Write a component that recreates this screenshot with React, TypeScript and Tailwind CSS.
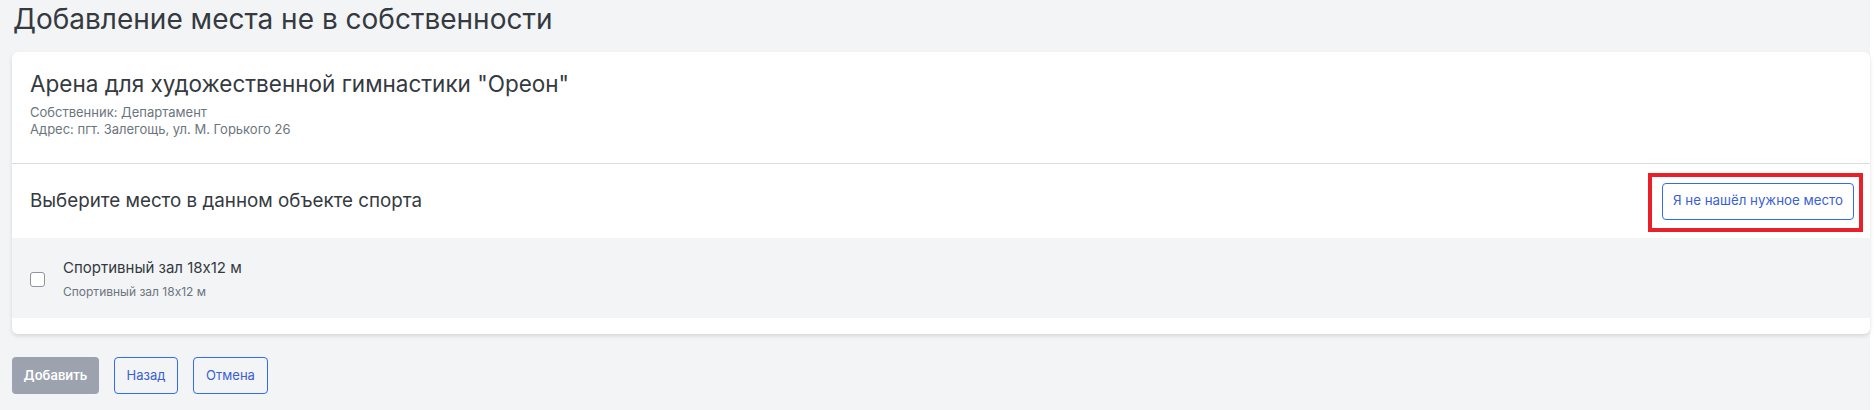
import { useState } from "react";

const FONT = "font-['Inter',sans-serif]";

export default function App() {
	const [checked, setChecked] = useState(false);

	return (
		<div className={`flex h-[410px] w-[1876px] bg-white ${FONT}`}>
			<div className="flex w-[1870px] flex-col bg-[#f3f4f6] pl-3">
				<h1 className="mt-[2px] pl-px text-[28px] leading-[34px] font-normal text-[#343a40]">
					Добавление места не в собственности
				</h1>

				<div className="mt-[16px] overflow-hidden rounded-md bg-white shadow-[0_2px_4px_rgba(0,0,0,0.12)]">
					{/* object summary */}
					<div className="h-[112px] border-b border-[#dcdcdc] px-[18px] pt-[17px]">
						<h2 className="text-[22.5px] leading-[30px] text-[#343a40]">
							Арена для художественной гимнастики "Ореон"
						</h2>
						<div className="mt-[5px] text-[13px] leading-[17px] text-[#6c757d]">
							<div>Собственник: Департамент</div>
							<div>Адрес: пгт. Залегощь, ул. М. Горького 26</div>
						</div>
					</div>

					{/* place picker head */}
					<div className="flex h-[74px] items-center justify-between pr-[16px] pl-[18px]">
						<h3 className="text-[18.8px] text-[#343a40]">
							Выберите место в данном объекте спорта
						</h3>
						<div className="relative">
							<button
								type="button"
								className="h-[37px] w-[192px] rounded-[4px] border border-[#2f6ee8] bg-white text-[13.3px] text-[#3a5fd6]"
							>
								Я не нашёл нужное место
							</button>
							{/* review highlight */}
							<div className="pointer-events-none absolute -top-[10px] -right-[9px] -bottom-[12px] -left-[14px] border-[4px] border-[#e8202a]" />
						</div>
					</div>

					{/* places */}
					<label className="flex h-[80px] cursor-pointer items-center bg-[#f3f4f6] pl-[18px]">
						<input
							type="checkbox"
							checked={checked}
							onChange={(e) => setChecked(e.target.checked)}
							className="mt-[2px] h-[15px] w-[15px] appearance-none rounded-[3px] border border-[#8f959b] bg-white checked:bg-[#2f6ee8]"
						/>
						<div className="ml-[18px]">
							<div className="text-[15px] leading-[22px] text-[#343a40]">
								Спортивный зал 18x12 м
							</div>
							<div className="mt-[4px] text-[12px] leading-[17px] text-[#6c757d]">
								Спортивный зал 18x12 м
							</div>
						</div>
					</label>
					<div className="h-[16px]" />
				</div>

				<div className="mt-[23px] flex gap-[15px]">
					<button
						type="button"
						className="h-[37px] w-[87px] rounded-[4px] bg-[#9ca3af] text-[13px] font-semibold text-white"
					>
						Добавить
					</button>
					<button
						type="button"
						className="h-[37px] w-[64px] rounded-[4px] border border-[#2f6ee8] text-[13px] text-[#3a5fd6]"
					>
						Назад
					</button>
					<button
						type="button"
						className="h-[37px] w-[75px] rounded-[4px] border border-[#2f6ee8] text-[13px] text-[#3a5fd6]"
					>
						Отмена
					</button>
				</div>
			</div>
		</div>
	);
}
